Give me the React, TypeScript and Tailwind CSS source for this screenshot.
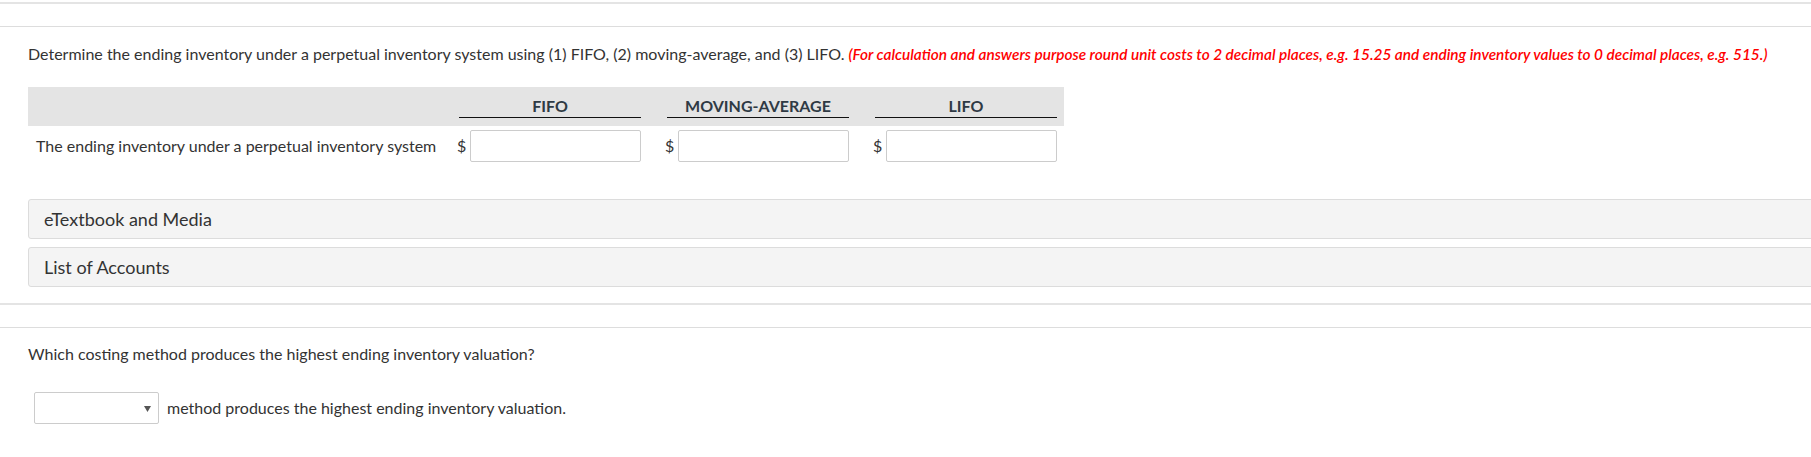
import React from 'react';

const columns = ['FIFO', 'MOVING-AVERAGE', 'LIFO'];

function MoneyInput({ first }: { first?: boolean }) {
  return (
    <div className={`flex w-[182px] shrink-0 items-center justify-between ${first ? '' : 'ml-[26px]'}`}>
      <span className="-ml-[2px] text-[16px] text-[#333]">$</span>
      <input
        type="text"
        className="h-[32px] w-[171px] rounded-[2px] border border-[#cccccc] bg-white px-2 text-[14px] outline-none"
      />
    </div>
  );
}

function Panel({ label }: { label: string }) {
  return (
    <div className="-mr-[6px] flex h-[40px] items-center rounded-[3px] border border-[#dcdcdc] bg-[#f4f4f4] pl-[15px] text-[18px] text-[#333]">
      {label}
    </div>
  );
}

export default function App() {
  return (
    <div className="min-h-screen w-full overflow-hidden bg-white font-['Lato','Liberation_Sans',sans-serif] text-[#333]">
      <div className="mt-[2px] h-[2px] bg-[#e4e4e4]" />

      {/* part 1 */}
      <div className="mt-[22px] border-t border-b-2 border-t-[#dddddd] border-b-[#e4e4e4] pl-[28px] pt-[17px] pb-[16px]">
        <p className="whitespace-nowrap text-[16px] leading-[20px]">
          Determine the ending inventory under a perpetual inventory system using (1) FIFO, (2) moving-average, and (3) LIFO.{' '}
          <span className="text-[15.4px] font-semibold italic text-[#ff0000]">
            (For calculation and answers purpose round unit costs to 2 decimal places, e.g. 15.25 and ending inventory values to 0 decimal places, e.g. 515.)
          </span>
        </p>

        <div className="mt-[23px] w-[1036px]">
          <div className="flex bg-[#e4e4e4] pb-[8px]">
            <div className="w-[431px] shrink-0" />
            {columns.map((c, i) => (
              <div
                key={c}
                className={`w-[182px] shrink-0 border-b border-[#111] pt-[9px] pb-[1px] text-center text-[16px] font-bold leading-[20px] text-[#2f3a44] ${i > 0 ? 'ml-[26px]' : ''}`}
              >
                {c}
              </div>
            ))}
          </div>
          <div className="mt-[4px] flex items-center">
            <div className="w-[431px] shrink-0 pl-[8px] text-[16px] leading-[20px]">
              The ending inventory under a perpetual inventory system
            </div>
            <MoneyInput first />
            <MoneyInput />
            <MoneyInput />
          </div>
        </div>

        <div className="mt-[37px]">
          <Panel label="eTextbook and Media" />
        </div>
        <div className="mt-[8px]">
          <Panel label="List of Accounts" />
        </div>
      </div>

      {/* part 2 */}
      <div className="mt-[22px] border-t border-[#dddddd] pl-[28px] pt-[16px]">
        <p className="text-[16px] leading-[20px]">
          Which costing method produces the highest ending inventory valuation?
        </p>
        <div className="mt-[28px] ml-[6px] flex items-center gap-[8px]">
          <div className="relative h-[32px] w-[125px] rounded-[2px] border border-[#cccccc] bg-white">
            <svg
              className="absolute right-[7px] top-[13px]"
              width="7"
              height="6"
              viewBox="0 0 7 6"
            >
              <path d="M0 0h7L3.5 6z" fill="#555" />
            </svg>
          </div>
          <span className="text-[16px] leading-[20px]">
            method produces the highest ending inventory valuation.
          </span>
        </div>
      </div>
    </div>
  );
}
